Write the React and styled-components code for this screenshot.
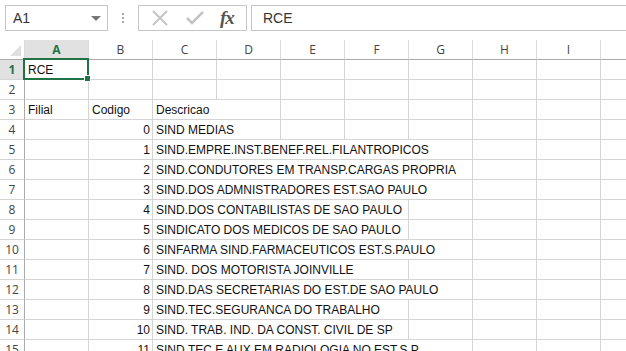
import React from "react";
import styled, { createGlobalStyle } from "styled-components";

const Global = createGlobalStyle`
    html, body {
        margin: 0;
        padding: 0;
        background: #fff;
        overflow: hidden;
    }
`;

const Window = styled.div`
    width: 626px;
    height: 351px;
    overflow: hidden;
    background: #fff;
    font-family: "Liberation Sans", Arial, sans-serif;
`;

const FormulaBar = styled.div`
    display: flex;
    align-items: center;
    height: 40px;
    padding: 5px 0 9px 5px;
    box-sizing: border-box;
`;

const NameBox = styled.div`
    width: 103px;
    height: 26px;
    box-sizing: border-box;
    border: 1px solid #c6c6c6;
    display: flex;
    align-items: center;
    justify-content: space-between;
    padding: 0 6px 0 7px;
    font-size: 14px;
    color: #333;
`;

const Caret = styled.span`
    width: 0;
    height: 0;
    border-left: 5px solid transparent;
    border-right: 5px solid transparent;
    border-top: 5px solid #777;
`;

const Dots = styled.div`
    width: 30px;
    display: flex;
    flex-direction: column;
    align-items: center;
    gap: 2px;
    span {
        width: 2px;
        height: 2px;
        background: #a8a8a8;
    }
`;

const FxBox = styled.div`
    width: 109px;
    height: 26px;
    box-sizing: border-box;
    border: 1px solid #c6c6c6;
    display: flex;
    align-items: center;
    justify-content: space-around;
    padding: 0 4px;
    margin-right: 4px;
`;

const Fx = styled.span`
    font-family: "Liberation Serif", serif;
    font-style: italic;
    font-weight: bold;
    font-size: 19px;
    color: #555;
    letter-spacing: -1px;
`;

const FormulaInput = styled.div`
    flex: 1;
    height: 26px;
    box-sizing: border-box;
    border: 1px solid #c6c6c6;
    border-right: none;
    display: flex;
    align-items: center;
    padding-left: 11px;
    font-size: 14px;
    color: #333;
`;

const Sheet = styled.div`
    display: grid;
    grid-template-columns: 25px repeat(10, 64px);
    grid-auto-rows: 20px;
    border-left: 1px solid #444;
    margin-left: -1px;
    position: relative;
`;

const Corner = styled.div`
    border-right: 1px solid #dadada;
    border-bottom: 1px solid #ababab;
    position: relative;
    &::after {
        content: "";
        position: absolute;
        right: 3px;
        bottom: 3px;
        border-left: 11px solid transparent;
        border-bottom: 11px solid #dfdfdf;
    }
`;

const ColHead = styled.div`
    display: flex;
    align-items: center;
    justify-content: center;
    font-family: "Open Sans", sans-serif;
    font-size: 12px;
    color: ${p => (p.$active ? "#217346" : "#444")};
    font-weight: ${p => (p.$active ? "bold" : "normal")};
    background: ${p => (p.$active ? "#e1e1e1" : "#fff")};
    border-right: 1px solid #dadada;
    border-bottom: ${p => (p.$active ? "2px solid #217346" : "1px solid #ababab")};
    box-sizing: border-box;
`;

const RowHead = styled.div`
    display: flex;
    align-items: center;
    justify-content: center;
    font-family: "Open Sans", sans-serif;
    font-size: 12px;
    color: ${p => (p.$active ? "#217346" : "#444")};
    font-weight: ${p => (p.$active ? "bold" : "normal")};
    background: ${p => (p.$active ? "#e1e1e1" : "#fff")};
    border-right: 1px solid #ababab;
    border-bottom: 1px solid #d4d4d4;
    box-sizing: border-box;
`;

const Cell = styled.div`
    grid-column: span ${p => p.$span || 1};
    border-right: 1px solid #d4d4d4;
    border-bottom: 1px solid #d4d4d4;
    box-sizing: border-box;
    padding: 3px 2px 0 3px;
    font-size: 12px;
    color: #111;
    white-space: nowrap;
    overflow: ${p => (p.$spill ? "visible" : "hidden")};
    text-align: ${p => (p.$num ? "right" : "left")};
    position: relative;
    z-index: ${p => (p.$spill ? 1 : 0)};
`;

const Selection = styled.div`
    position: absolute;
    left: -2px;
    top: -2px;
    right: -1px;
    bottom: -1px;
    border: 2px solid #217346;
    pointer-events: none;
    &::after {
        content: "";
        position: absolute;
        right: -4px;
        bottom: -4px;
        width: 5px;
        height: 5px;
        background: #217346;
        border: 1px solid #fff;
    }
`;

const cols = ["A", "B", "C", "D", "E", "F", "G", "H", "I", ""];

const rows = [
    ["0", "SIND MEDIAS", 2],
    ["1", "SIND.EMPRE.INST.BENEF.REL.FILANTROPICOS", 5],
    ["2", "SIND.CONDUTORES EM TRANSP.CARGAS PROPRIA", 5],
    ["3", "SIND.DOS ADMNISTRADORES EST.SAO PAULO", 5],
    ["4", "SIND.DOS CONTABILISTAS DE SAO PAULO", 4],
    ["5", "SINDICATO DOS MEDICOS DE SAO PAULO", 4],
    ["6", "SINFARMA SIND.FARMACEUTICOS EST.S.PAULO", 5],
    ["7", "SIND. DOS MOTORISTA JOINVILLE", 4],
    ["8", "SIND.DAS SECRETARIAS DO EST.DE SAO PAULO", 5],
    ["9", "SIND.TEC.SEGURANCA DO TRABALHO", 4],
    ["10", "SIND. TRAB. IND. DA CONST. CIVIL DE SP", 4],
    ["11", "SIND.TEC.E AUX.EM RADIOLOGIA NO EST.S.P.", 5],
];

const XIcon = () => (
    <svg width="18" height="18" viewBox="0 0 18 18">
        <path d="M2 2 L16 16 M16 2 L2 16" stroke="#c4c4c4" strokeWidth="2" fill="none" />
    </svg>
);

const CheckIcon = () => (
    <svg width="18" height="18" viewBox="0 0 18 18">
        <path d="M1 9 L6 14 L17 3" stroke="#c4c4c4" strokeWidth="2.5" fill="none" />
    </svg>
);

const blanks = n => Array.from({ length: n }, (_, i) => <Cell key={"b" + i} />);

const App = () => {
    return (
        <Window>
            <Global />
            <FormulaBar>
                <NameBox>
                    A1
                    <Caret />
                </NameBox>
                <Dots>
                    <span />
                    <span />
                    <span />
                </Dots>
                <FxBox>
                    <XIcon />
                    <CheckIcon />
                    <Fx>fx</Fx>
                </FxBox>
                <FormulaInput>RCE</FormulaInput>
            </FormulaBar>
            <Sheet>
                <Corner />
                {cols.map((c, i) => (
                    <ColHead key={i} $active={c === "A"}>{c}</ColHead>
                ))}

                <RowHead $active>1</RowHead>
                <Cell $spill>
                    RCE
                    <Selection />
                </Cell>
                {blanks(9)}

                <RowHead>2</RowHead>
                {blanks(10)}

                <RowHead>3</RowHead>
                <Cell>Filial</Cell>
                <Cell>Codigo</Cell>
                <Cell $span={2}>Descricao</Cell>
                {blanks(6)}

                {rows.map(([code, desc, span], i) => (
                    <React.Fragment key={code}>
                        <RowHead>{i + 4}</RowHead>
                        <Cell />
                        <Cell $num>{code}</Cell>
                        <Cell $span={span} $spill>{desc}</Cell>
                        {blanks(8 - span)}
                    </React.Fragment>
                ))}
            </Sheet>
        </Window>
    );
};

export default App;
